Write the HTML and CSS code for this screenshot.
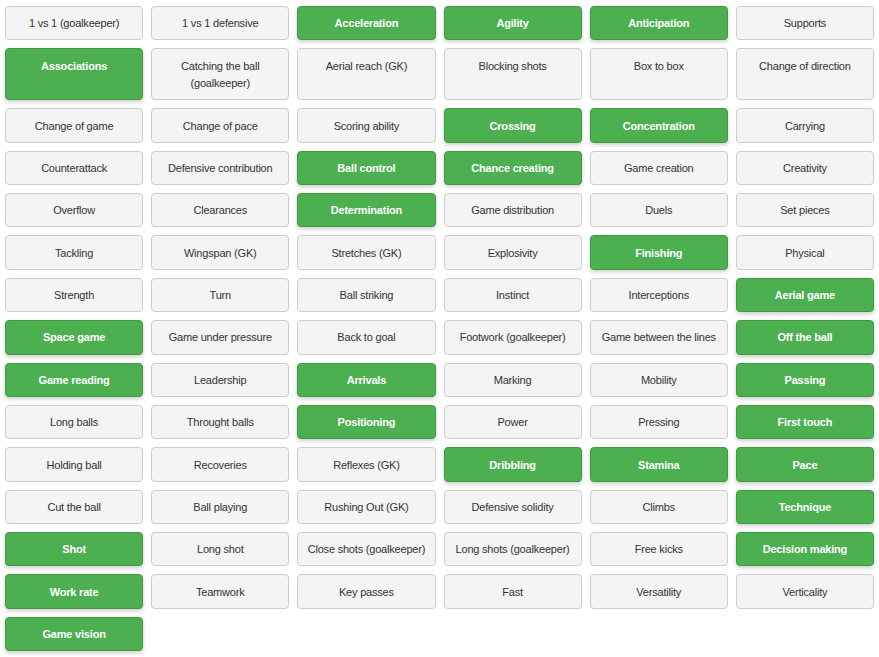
FILE: index.html
```html
<!DOCTYPE html>
<html lang="en">
<head>
<meta charset="utf-8">
<title>Skills</title>
<link rel="stylesheet" href="styles.css">
</head>
<body>
<div class="grid">
  <div class="tag">1 vs 1 (goalkeeper)</div>
  <div class="tag">1 vs 1 defensive</div>
  <div class="tag on">Acceleration</div>
  <div class="tag on">Agility</div>
  <div class="tag on">Anticipation</div>
  <div class="tag">Supports</div>

  <div class="tag on">Associations</div>
  <div class="tag">Catching the ball (goalkeeper)</div>
  <div class="tag">Aerial reach (GK)</div>
  <div class="tag">Blocking shots</div>
  <div class="tag">Box to box</div>
  <div class="tag">Change of direction</div>

  <div class="tag">Change of game</div>
  <div class="tag">Change of pace</div>
  <div class="tag">Scoring ability</div>
  <div class="tag on">Crossing</div>
  <div class="tag on">Concentration</div>
  <div class="tag">Carrying</div>

  <div class="tag">Counterattack</div>
  <div class="tag">Defensive contribution</div>
  <div class="tag on">Ball control</div>
  <div class="tag on">Chance creating</div>
  <div class="tag">Game creation</div>
  <div class="tag">Creativity</div>

  <div class="tag">Overflow</div>
  <div class="tag">Clearances</div>
  <div class="tag on">Determination</div>
  <div class="tag">Game distribution</div>
  <div class="tag">Duels</div>
  <div class="tag">Set pieces</div>

  <div class="tag">Tackling</div>
  <div class="tag">Wingspan (GK)</div>
  <div class="tag">Stretches (GK)</div>
  <div class="tag">Explosivity</div>
  <div class="tag on">Finishing</div>
  <div class="tag">Physical</div>

  <div class="tag">Strength</div>
  <div class="tag">Turn</div>
  <div class="tag">Ball striking</div>
  <div class="tag">Instinct</div>
  <div class="tag">Interceptions</div>
  <div class="tag on">Aerial game</div>

  <div class="tag on">Space game</div>
  <div class="tag">Game under pressure</div>
  <div class="tag">Back to goal</div>
  <div class="tag">Footwork (goalkeeper)</div>
  <div class="tag">Game between the lines</div>
  <div class="tag on">Off the ball</div>

  <div class="tag on">Game reading</div>
  <div class="tag">Leadership</div>
  <div class="tag on">Arrivals</div>
  <div class="tag">Marking</div>
  <div class="tag">Mobility</div>
  <div class="tag on">Passing</div>

  <div class="tag">Long balls</div>
  <div class="tag">Throught balls</div>
  <div class="tag on">Positioning</div>
  <div class="tag">Power</div>
  <div class="tag">Pressing</div>
  <div class="tag on">First touch</div>

  <div class="tag">Holding ball</div>
  <div class="tag">Recoveries</div>
  <div class="tag">Reflexes (GK)</div>
  <div class="tag on">Dribbling</div>
  <div class="tag on">Stamina</div>
  <div class="tag on">Pace</div>

  <div class="tag">Cut the ball</div>
  <div class="tag">Ball playing</div>
  <div class="tag">Rushing Out (GK)</div>
  <div class="tag">Defensive solidity</div>
  <div class="tag">Climbs</div>
  <div class="tag on">Technique</div>

  <div class="tag on">Shot</div>
  <div class="tag">Long shot</div>
  <div class="tag">Close shots (goalkeeper)</div>
  <div class="tag">Long shots (goalkeeper)</div>
  <div class="tag">Free kicks</div>
  <div class="tag on">Decision making</div>

  <div class="tag on">Work rate</div>
  <div class="tag">Teamwork</div>
  <div class="tag">Key passes</div>
  <div class="tag">Fast</div>
  <div class="tag">Versatility</div>
  <div class="tag">Verticality</div>

  <div class="tag on">Game vision</div>
</div>
</body>
</html>
```

FILE: styles.css
```css
html, body {
  margin: 0;
  padding: 0;
  background: #ffffff;
}

body {
  font-family: "Liberation Sans", Arial, sans-serif;
  font-size: 11px;
  letter-spacing: -0.2px;
  color: #333333;
}

.grid {
  display: grid;
  grid-template-columns: repeat(6, 1fr);
  gap: 8px;
  padding: 6px 5px;
}

.tag {
  background: #f4f4f4;
  border: 1px solid #cccccc;
  border-radius: 4px;
  padding: 8.2px 2px 6.6px;
  line-height: 17.6px;
  text-align: center;
}

.tag.on {
  background: #4caf50;
  border-color: #3f9a43;
  color: #ffffff;
  font-weight: bold;
  box-shadow: 0 2px 4px rgba(0, 0, 0, 0.2);
}
```
